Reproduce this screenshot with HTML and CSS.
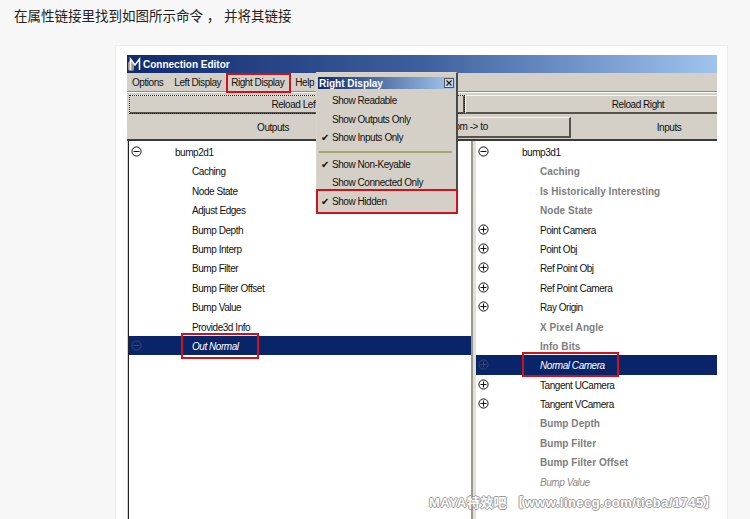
FILE: index.html
```html
<!DOCTYPE html>
<html lang="zh">
<head>
<meta charset="utf-8">
<title>Connection Editor</title>
<link rel="stylesheet" href="styles.css">
</head>
<body>
<p class="caption">在属性链接里找到如图所示命令 ， 并将其链接</p>
<div class="card">
  <div class="win">
    <div class="title"><svg class="logo" width="16" height="18" viewBox="0 0 16 18"><rect x="1" y="6" width="6" height="10" rx="2.5" fill="#9a9488"/><path d="M3.5 15V4l4.5 6 4.500-6v11" fill="none" stroke="#fff" stroke-width="1.5"/></svg><span>Connection Editor</span></div>
    <div class="menu"><span class="m1">Options</span><span class="m2">Left Display</span><span class="m3">Right Display</span><span class="m4">Help</span></div>
    <div class="reload">
      <div class="btn btn-l"><span>Reload Left</span></div>
      <div class="btn btn-r">Reload Right</div>
    </div>
    <div class="heads">
      <div class="hd hd-l">Outputs</div>
      <div class="btn btn-c">from -&gt; to</div>
      <div class="hd hd-r">Inputs</div>
    </div>
    <div class="panes">
      <div class="pane pane-l">
        <div class="row grp"><svg class="ic" viewBox="0 0 11 11"><circle cx="5.5" cy="5.5" r="4.6"/><path d="M2.5 5.5h6"/></svg>bump2d1</div>
        <div class="row">Caching</div>
        <div class="row">Node State</div>
        <div class="row">Adjust Edges</div>
        <div class="row">Bump Depth</div>
        <div class="row">Bump Interp</div>
        <div class="row">Bump Filter</div>
        <div class="row">Bump Filter Offset</div>
        <div class="row">Bump Value</div>
        <div class="row">Provide3d Info</div>
        <div class="row sel"><svg class="ic dim" viewBox="0 0 11 11"><circle cx="5.5" cy="5.5" r="4.6"/><path d="M2.5 5.5h6"/></svg>Out Normal</div>
      </div>
      <div class="split"></div>
      <div class="pane pane-r">
        <div class="row grp"><svg class="ic" viewBox="0 0 11 11"><circle cx="5.5" cy="5.5" r="4.6"/><path d="M2.5 5.5h6"/></svg>bump3d1</div>
        <div class="row gray">Caching</div>
        <div class="row gray">Is Historically Interesting</div>
        <div class="row gray">Node State</div>
        <div class="row"><svg class="ic" viewBox="0 0 11 11"><circle cx="5.5" cy="5.5" r="4.6"/><path d="M2.5 5.5h6M5.5 2.5v6"/></svg>Point Camera</div>
        <div class="row"><svg class="ic" viewBox="0 0 11 11"><circle cx="5.5" cy="5.5" r="4.6"/><path d="M2.5 5.5h6M5.5 2.5v6"/></svg>Point Obj</div>
        <div class="row"><svg class="ic" viewBox="0 0 11 11"><circle cx="5.5" cy="5.5" r="4.6"/><path d="M2.5 5.5h6M5.5 2.5v6"/></svg>Ref Point Obj</div>
        <div class="row"><svg class="ic" viewBox="0 0 11 11"><circle cx="5.5" cy="5.5" r="4.6"/><path d="M2.5 5.5h6M5.5 2.5v6"/></svg>Ref Point Camera</div>
        <div class="row"><svg class="ic" viewBox="0 0 11 11"><circle cx="5.5" cy="5.5" r="4.6"/><path d="M2.5 5.5h6M5.5 2.5v6"/></svg>Ray Origin</div>
        <div class="row gray">X Pixel Angle</div>
        <div class="row gray">Info Bits</div>
        <div class="row sel"><svg class="ic dim" viewBox="0 0 11 11"><circle cx="5.5" cy="5.5" r="4.6"/><path d="M2.5 5.5h6M5.5 2.5v6"/></svg>Normal Camera</div>
        <div class="row"><svg class="ic" viewBox="0 0 11 11"><circle cx="5.5" cy="5.5" r="4.6"/><path d="M2.5 5.5h6M5.5 2.5v6"/></svg>Tangent UCamera</div>
        <div class="row"><svg class="ic" viewBox="0 0 11 11"><circle cx="5.5" cy="5.5" r="4.6"/><path d="M2.5 5.5h6M5.5 2.5v6"/></svg>Tangent VCamera</div>
        <div class="row gray">Bump Depth</div>
        <div class="row gray">Bump Filter</div>
        <div class="row gray">Bump Filter Offset</div>
        <div class="row ghost">Bump Value</div>
      </div>
    </div>
    <div class="popup">
      <div class="pop-title"><span>Right Display</span><svg class="pop-x" width="10" height="10" viewBox="0 0 10 10"><rect x=".5" y=".5" width="9" height="9" fill="#c9d6e6" stroke="#555"/><path d="M2.500 2.500l5 5M7.500 2.500l-5 5" stroke="#222" stroke-width="1.2"/></svg></div>
      <div class="item">Show Readable</div>
      <div class="item">Show Outputs Only</div>
      <div class="item chk">Show Inputs Only</div>
      <div class="sep"></div>
      <div class="item chk">Show Non-Keyable</div>
      <div class="item">Show Connected Only</div>
      <div class="item chk">Show Hidden</div>
    </div>
    <div class="mark mark-menu"></div>
    <div class="mark mark-pop"></div>
    <div class="mark mark-out"></div>
    <div class="mark mark-in"></div>
    <div class="water">MAYA特效吧 【www.linecg.com/tieba/1745】</div>
  </div>
</div>
</body>
</html>
```
FILE: styles.css
```css
* { box-sizing: border-box; }
html, body { height: 519px; overflow: hidden; }
body {
  margin: 0;
  background: #f7f7f7;
  font-family: "Liberation Sans", "Noto Sans CJK SC", sans-serif;
  font-size: 10px;
  letter-spacing: -0.45px;
  color: #111;
}
.caption {
  margin: 0;
  padding: 8px 0 0 14px;
  height: 45px;
  font-size: 13.500px;
  line-height: 17px;
  letter-spacing: 0;
  color: #222;
}
.card {
  margin-left: 115px;
  width: 613px;
  height: 474px;
  padding: 9px 10px 0 11px;
  background: #fff;
  border: 1px solid #ececec;
  border-bottom: 0;
}
.win {
  position: relative;
  width: 590px;
  height: 470px;
  background: #d4d0c8;
}
.title {
  height: 18px;
  display: flex;
  align-items: center;
  color: #fff;
  font-weight: bold;
  font-size: 10px;
  letter-spacing: 0;
  background: linear-gradient(90deg, #0f2a6e 0%, #3e5f9e 50%, #a0c4ee 100%);
}
.logo { flex: none; }
.menu {
  height: 19px;
  display: flex;
  align-items: center;
  border-bottom: 1px solid #8d8a83;
  box-shadow: 0 1px 0 #fff;
}
.m1 { margin-left: 5px; }
.m2 { margin-left: 11px; }
.m3 { margin-left: 10px; }
.m4 { margin-left: 11px; }
.reload {
  display: flex;
  height: 19px;
  margin-top: 3px;
}
.btn {
  display: flex;
  align-items: center;
  justify-content: center;
  background: #d4d0c8;
  border-top: 1px solid #f4f3ef;
  border-left: 1px solid #f4f3ef;
  border-right: 2px solid #55534e;
  border-bottom: 2px solid #55534e;
}
.btn-l {
  width: 336px;
  margin-left: 2px;
  padding-right: 4px;
  outline: 1px dotted #222;
  outline-offset: -1px;
}
.btn-r { flex: 1; border-right: 0; padding-left: 93px; }
.heads {
  display: flex;
  height: 24px;
  align-items: center;
  margin-top: 1px;
}
.hd { text-align: center; }
.hd-l { width: 244px; margin-left: 2px; padding-left: 44px; }
.btn-c { width: 198px; height: 21px; padding-right: 6px; }
.hd-r { flex: 1; padding-left: 50px; }
.panes {
  display: flex;
  height: 380px;
  border-top: 2px solid #3a3a38;
}
.pane {
  background: #fff;
  padding-top: 1px;
}
.pane-l { width: 343px; margin-left: 1px; border-left: 1px solid #222; }
.pane-r { flex: 1; }
.split {
  width: 5px;
  background: #e2dfd9;
  border-left: 2px solid #9b9890;
}
.row {
  position: relative;
  height: 19.400px;
  padding: 1px 0 0 63px;
  line-height: 19.400px;
  white-space: nowrap;
}
.pane-r .row { padding-left: 64px; }
.row.grp, .pane-r .row.grp { padding-left: 46px; }
.ic {
  position: absolute;
  left: 2px;
  top: 4px;
  width: 11px;
  height: 11px;
  fill: none;
  stroke: #111;
  stroke-width: 1;
}
.ic.dim { stroke: #3a4870; }
.gray { font-weight: bold; color: #7d7d7d; letter-spacing: 0.05px; }
.ghost { font-style: italic; color: #8a8a8a; }
.sel { background: #0a246a; color: #fff; font-style: italic; }
.popup {
  position: absolute;
  left: 189px;
  top: 17px;
  width: 142px;
  height: 142px;
  background: #d4d0c8;
  border: 1px solid #d8d5ce;
  border-right: 2px solid #4a4a48;
  border-bottom: 2px solid #4a4a48;
  padding: 4px 1px 0 1px;
}
.pop-title {
  height: 12px;
  display: flex;
  align-items: center;
  justify-content: space-between;
  padding: 0 1px 0 1px;
  color: #fff;
  font-weight: bold;
  font-size: 10px;
  letter-spacing: 0;
  background: linear-gradient(90deg, #0f2a6e 0%, #a6caf0 100%);
  margin-bottom: 3px;
}
.item {
  position: relative;
  height: 18.500px;
  line-height: 18.500px;
  padding-left: 14px;
  white-space: nowrap;
}
.chk::before {
  content: "✔";
  position: absolute;
  left: 3px;
  top: 0;
  font-family: "DejaVu Sans", sans-serif;
  font-size: 10px;
}
.sep {
  height: 2px;
  margin: 3px 3px 3px 1px;
  background: #a6a66c;
}
.mark {
  position: absolute;
  border: 2px solid #d0121d;
}
.mark-menu { left: 99px; top: 18px; width: 65px; height: 20px; }
.mark-pop { left: 189px; top: 134px; width: 142px; height: 25px; }
.mark-out { left: 54px; top: 278px; width: 78px; height: 26px; }
.mark-in { left: 395px; top: 297px; width: 97px; height: 25px; }
.water {
  position: absolute;
  left: 302px;
  top: 437px;
  white-space: nowrap;
  font-size: 13px;
  font-weight: bold;
  letter-spacing: .45px;
  color: #fff;
  text-shadow: 1px 0 0 #9a9a9a, -1px 0 0 #9a9a9a, 0 1px 0 #9a9a9a, 0 -1px 0 #9a9a9a;
}
```
